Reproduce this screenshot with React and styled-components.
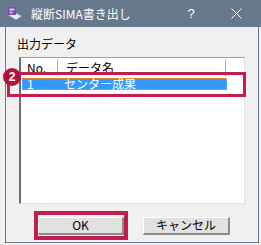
import React from "react";
import styled, { createGlobalStyle } from "styled-components";

const GlobalStyle = createGlobalStyle`
    html, body {
        margin: 0;
        padding: 0;
        background: #f0f0f0;
    }
    body {
        font-family: "Noto Sans CJK JP", "Noto Sans", sans-serif;
        font-size: 12px;
        color: #000;
    }
`;

const Window = styled.div`
    width: 261px;
    height: 245px;
    display: flex;
    flex-direction: column;
    overflow: hidden;
`;

const TitleBar = styled.div`
    height: 27px;
    background: #68788c;
    display: flex;
    align-items: center;
    padding-left: 7px;
    color: #fff;
`;

const TitleText = styled.span`
    margin-left: 8px;
    font-size: 12px;
    flex: 1;
`;

const TitleButton = styled.span`
    width: ${p => p.$w}px;
    display: flex;
    justify-content: center;
    align-items: center;
    font-family: "Liberation Sans", sans-serif;
    font-size: 13px;
`;

const Frame = styled.div`
    margin: 0 2px 0 5px;
    height: 216px;
    border: 1px solid #68788c;
    border-top: none;
    display: flex;
    flex-direction: column;
    padding: 10px 13px 0;
    box-sizing: border-box;
    position: relative;
`;

const GroupLabel = styled.div`
    height: 14px;
    line-height: 14px;
    margin-left: -2px;
    margin-bottom: 6px;
`;

const ListBox = styled.div`
    height: 147px;
    background: #fff;
    border-top: 1px solid #a0a0a0;
    border-left: 2px solid #6e6e6e;
    border-right: 1px solid #e3e3e3;
    border-bottom: 1px solid #e3e3e3;
    box-sizing: border-box;
`;

const Header = styled.div`
    display: grid;
    grid-template-columns: 37px 168px 1fr;
    height: 16px;
    margin-top: 1px;
`;

const HeadCell = styled.div`
    padding-left: ${p => p.$pad || 0}px;
    line-height: 17px;
    border-right: ${p => (p.$last ? "none" : "1px solid #b4b4b4")};
`;

const Row = styled.div`
    display: grid;
    grid-template-columns: 42px 1fr;
    margin: 3px 17px 0 1px;
    height: 12px;
    line-height: 12px;
    background: #3399ff;
    color: #fff;
    outline: 1px dotted #ff9a3c;
    outline-offset: -1px;
`;

const Cell = styled.div`
    padding-left: ${p => p.$pad}px;
`;

const Highlight = styled.div`
    position: absolute;
    border: ${p => p.$bw}px solid #c31c4d;
    box-sizing: border-box;
`;

const RowHighlight = styled(Highlight)`
    left: 1px;
    top: 45px;
    width: 239px;
    height: 25px;
`;

const Badge = styled.div`
    position: absolute;
    left: -3px;
    top: 41px;
    width: 18px;
    height: 18px;
    border-radius: 50%;
    background: #b3123f;
    color: #fff;
    font-family: "Liberation Sans", sans-serif;
    font-weight: bold;
    font-size: 12px;
    display: flex;
    align-items: center;
    justify-content: center;
`;

const ButtonRow = styled.div`
    display: flex;
    justify-content: center;
    gap: 19px;
    margin-top: 12px;
    margin-left: 4px;
`;

const ButtonWrap = styled.div`
    position: relative;
`;

const OkHighlight = styled(Highlight)`
    left: -4px;
    top: -5px;
    right: -4px;
    bottom: -5px;
`;

const Button = styled.button`
    width: ${p => p.$w}px;
    height: 18px;
    padding: 0;
    background: #e1e1e1;
    border: none;
    border-top: 1px solid #fff;
    border-left: 1px solid #fff;
    border-right: 2px solid #8a8a8a;
    border-bottom: 2px solid #8a8a8a;
    box-sizing: border-box;
    font-family: "Noto Sans CJK JP", sans-serif;
    font-size: 12px;
    line-height: 14px;
    color: #000;
`;

const AppIcon = () => (
    <svg width="16" height="15" viewBox="0 0 16 15">
        <path d="M1 9 L9 14 L15 10 L7 6 Z" fill="#e8e8ee" stroke="#8a8aa0" strokeWidth="0.8" />
        <rect x="1" y="1" width="8" height="8" fill="#7a4fb0" />
        <rect x="2.5" y="2.5" width="5" height="2" fill="#d8c8f0" />
        <rect x="2.5" y="5.5" width="3" height="2" fill="#c8b0e8" />
    </svg>
);

const CloseIcon = () => (
    <svg width="11" height="11" viewBox="0 0 11 11">
        <path d="M0.5 0.5 L10.5 10.5 M10.5 0.5 L0.5 10.5" stroke="#fff" strokeWidth="1" />
    </svg>
);

const App = () => {
    return (
        <Window>
            <GlobalStyle />
            <TitleBar>
                <AppIcon />
                <TitleText>縦断SIMA書き出し</TitleText>
                <TitleButton $w={40}>?</TitleButton>
                <TitleButton $w={50}>
                    <CloseIcon />
                </TitleButton>
            </TitleBar>
            <Frame>
                <GroupLabel>出力データ</GroupLabel>
                <ListBox>
                    <Header>
                        <HeadCell $pad={6}>No.</HeadCell>
                        <HeadCell $pad={8}>データ名</HeadCell>
                        <HeadCell $last />
                    </Header>
                    <Row>
                        <Cell $pad={5}>1</Cell>
                        <Cell $pad={0}>センター成果</Cell>
                    </Row>
                </ListBox>
                <RowHighlight $bw={3} />
                <Badge>2</Badge>
                <ButtonRow>
                    <ButtonWrap>
                        <Button $w={86}>OK</Button>
                        <OkHighlight $bw={4} />
                    </ButtonWrap>
                    <ButtonWrap>
                        <Button $w={87}>キャンセル</Button>
                    </ButtonWrap>
                </ButtonRow>
            </Frame>
        </Window>
    );
};

export default App;
